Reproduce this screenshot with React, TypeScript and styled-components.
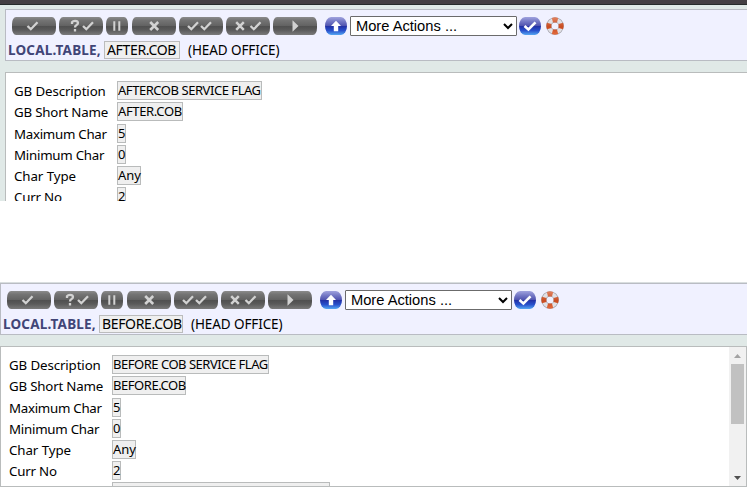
import React, { useId } from "react";
import styled, { createGlobalStyle } from "styled-components";

const GlobalStyle = createGlobalStyle`
  *, *::before, *::after { box-sizing: border-box; }
  html, body { margin: 0; background: #fff; overflow: hidden; }
  body { font-family: "Noto Sans", "Open Sans", sans-serif; font-size: 14px; color: #000; }
`;

const Page = styled.main`
  width: 747px;
  height: 490px;
  overflow: hidden;
  display: flex;
  flex-direction: column;
  gap: 81px;
`;

const Screen = styled.section<{ $first?: boolean }>`
  flex: none;
  height: ${(p) => (p.$first ? 201 : 205)}px;
  overflow: hidden;
  background: #e0e9e7;
  border-top: ${(p) => (p.$first ? "4px solid #443f43" : "1px solid #d9dedf")};
  padding: ${(p) => (p.$first ? "5px 0 0 5px" : "0")};
  box-shadow: ${(p) => (p.$first ? "inset 0 1px 0 #262b2b" : "none")};
`;

const Header = styled.header`
  height: 52px;
  background: #f0f1ff;
  border: 1px solid #b9bcc3;
  border-right: 0;
  padding: 5px 0 0 1px;
`;

const Toolbar = styled.div`
  height: 22px;
  display: flex;
  align-items: center;
  padding-left: 5px;
`;

const Pill = styled.button<{ $w?: number }>`
  flex: none;
  width: ${(p) => p.$w ?? 44}px;
  height: 18px;
  margin: 0 3.2px 0 0;
  padding: 0;
  border: 0;
  border-radius: 4px / 7px;
  background: linear-gradient(#8c8c8c 0, #747474 18%, #636363 48%, #505050 53%, #5a5a5a 72%, #7b7b7b 100%);
  display: flex;
  justify-content: center;
  align-items: center;
  svg { display: block; }
`;

const Round = styled.button`
  flex: none;
  width: 22px;
  height: 18px;
  margin: 0 3px 0 0;
  padding: 0;
  border: 0;
  border-radius: 6px / 9px;
  background: linear-gradient(#a0a3de 0, #7478c5 25%, #5155b0 48%, #2231a5 52%, #2850cb 75%, #55a7f2 100%);
  display: flex;
  justify-content: center;
  align-items: center;
`;

const Actions = styled.select`
  width: 167px;
  height: 20px;
  margin: 0 2px 0 0;
  padding: 0 0 0 1px;
  border: 1px solid #6b6b6b;
  border-radius: 1px;
  background: #fff;
  color: #000;
  font: 14.7px "Liberation Sans", Arial, sans-serif;
`;

const Spacer = styled.span`
  width: 4.6px;
`;

const Help = styled.span`
  display: flex;
  margin-left: 2px;
`;

const TitleLine = styled.div`
  display: flex;
  align-items: center;
  height: 20px;
  line-height: 18px;
  margin-top: 3px;
  white-space: pre;
`;

const AppName = styled.h1`
  width: 97px;
  margin: 0;
  padding-left: 1px;
  font-size: 13.5px;
  font-weight: 700;
  letter-spacing: 0.2px;
  color: #414577;
`;

const RecordId = styled.span<{ $w: number }>`
  width: ${(p) => p.$w}px;
  height: 18px;
  line-height: 16px;
  border: 1px solid #bbbcbd;
  background: #efefef;
  padding-left: 2px;
  font-size: 14px;
  letter-spacing: -0.35px;
`;

const Company = styled.span`
  margin-left: 8px;
  font-size: 13.5px;
  letter-spacing: -0.1px;
`;

const Content = styled.div<{ $open?: boolean }>`
  height: 141px;
  margin-top: 11px;
  border: 1px solid #b9bcbc;
  border-right-width: ${(p) => (p.$open ? 0 : 1)}px;
  background: #fff;
  display: flex;
`;

const Form = styled.dl`
  flex: 1;
  height: 139px;
  margin: 0;
  padding: 8px 0 0 8px;
  overflow: hidden;
`;

const Row = styled.div<{ $extra?: boolean }>`
  height: 21px;
  margin-top: ${(p) => (p.$extra ? 1 : 0)}px;
  display: flex;
  align-items: flex-start;
`;

const Label = styled.dt<{ $s: number }>`
  flex: none;
  width: 103px;
  line-height: 21px;
  font-size: 13.3px;
  letter-spacing: ${(p) => p.$s}px;
  white-space: nowrap;
`;

const Value = styled.dd<{ $w: number; $s?: number }>`
  flex: none;
  width: ${(p) => p.$w}px;
  height: 19px;
  margin: 0;
  border: 1px solid #b9bbbb;
  background: #efefef;
  line-height: 17px;
  font-size: 13px;
  letter-spacing: ${(p) => p.$s ?? 0}px;
  white-space: nowrap;
`;

const ScrollTrack = styled.div`
  width: 17px;
  background: #f1f1f1;
  display: flex;
  flex-direction: column;
  align-items: center;
`;

const ScrollThumb = styled.div`
  width: 13px;
  height: 60px;
  background: #c1c1c1;
  margin-bottom: auto;
`;

const tick = "M1 6L4.3 9.2L11 2.2";

type GlyphKind = "check" | "query" | "pause" | "cross" | "double" | "reject" | "play";

const Glyph = ({ kind }: { kind: GlyphKind }) => (
  <svg width="36" height="12" viewBox="0 0 36 12" fill="none" stroke="#d2d2d2" strokeWidth="2.3" overflow="visible">
    {kind === "check" && <path transform="translate(10.5)" d={tick} />}
    {kind === "query" && (
      <>
        <path transform="translate(19)" d={tick} />
        <path d="M9 4V2.2Q10 .8 12 .8Q15 .8 15 3Q15 4.4 13.3 5.2Q12 5.8 12 7.5M12 9V11.4" />
      </>
    )}
    {kind === "pause" && <path strokeWidth="2" d="M15.3 1.2V10.8M20.3 1.2V10.8" />}
    {kind === "cross" && <path strokeWidth="2.6" d="M14.2 2L22.2 10M22.2 2L14.2 10" />}
    {kind === "double" && (
      <>
        <path transform="translate(4)" d={tick} />
        <path transform="translate(17)" d={tick} />
      </>
    )}
    {kind === "reject" && (
      <>
        <path strokeWidth="2.5" d="M6.2 2.2L13.8 9.8M13.8 2.2L6.2 9.8" />
        <path transform="translate(19.5)" d={tick} />
      </>
    )}
    {kind === "play" && <path d="M15.5 0.2V11.8L21.5 6Z" fill="#d2d2d2" stroke="none" />}
  </svg>
);

const UpArrow = () => (
  <svg width="14" height="14" viewBox="0 0 14 14">
    <path d="M7 1.8L12 7H9.2V12.2H4.8V7H2Z" fill="#fff" />
  </svg>
);

const CommitTick = () => (
  <svg width="14" height="12" viewBox="0 0 14 12">
    <path d="M1.5 6L5.4 9.5L12.5 2.3" fill="none" stroke="#fff" strokeWidth="2.6" />
  </svg>
);

const HelpRing = () => {
  const id = useId();
  return (
    <svg width="18" height="18" viewBox="0 0 18 18">
      <defs>
        <linearGradient id={id} x2="0" y2="1">
          <stop stopColor="#e0815f" />
          <stop offset=".55" stopColor="#c94c21" />
          <stop offset="1" stopColor="#e26a3c" />
        </linearGradient>
      </defs>
      <circle cx="9" cy="9" r="6.2" fill="none" stroke="#9f9ea6" strokeWidth="5.2" />
      <circle cx="9" cy="9" r="6.2" fill="none" stroke="#e2e1e5" strokeWidth="3.8" />
      <path
        fill={`url(#${id})`}
        d="M5.8 1Q9-.3 12.2 1L11 5.4H7ZM5.8 17Q9 18.3 12.2 17L11 12.6H7ZM1 5.8Q-.3 9 1 12.2L5.4 11V7ZM17 5.8Q18.3 9 17 12.2L12.6 11V7Z"
      />
    </svg>
  );
};

const ScrollArrow = ({ down }: { down?: boolean }) => (
  <svg width="17" height="17" viewBox="0 0 17 17">
    <path d={down ? "M5 7H12L8.5 11Z" : "M5 11H12L8.5 7Z"} fill={down ? "#505050" : "#a3a3a3"} />
  </svg>
);

const buttons: { kind: GlyphKind; label: string; w?: number }[] = [
  { kind: "check", label: "Validate" },
  { kind: "query", label: "Check" },
  { kind: "pause", label: "Hold", w: 22 },
  { kind: "cross", label: "Delete" },
  { kind: "double", label: "Authorise" },
  { kind: "reject", label: "Reverse" },
  { kind: "play", label: "Next" },
];

interface Field {
  label: string;
  spacing: number;
  value: string;
  width: number;
  valueSpacing?: number;
}

const fieldsFor = (
  description: Pick<Field, "value" | "width" | "valueSpacing">,
  shortName: Pick<Field, "value" | "width" | "valueSpacing">,
): Field[] => [
  { label: "GB Description", spacing: -0.12, ...description },
  { label: "GB Short Name", spacing: -0.2, ...shortName },
  { label: "Maximum Char", spacing: -0.28, value: "5", width: 9 },
  { label: "Minimum Char", spacing: -0.25, value: "0", width: 9 },
  { label: "Char Type", spacing: -0.08, value: "Any", width: 24, valueSpacing: -0.1 },
  { label: "Curr No", spacing: -0.2, value: "2", width: 9 },
  { label: "", spacing: 0, value: "", width: 218 },
];

interface RecordProps {
  first?: boolean;
  id: string;
  idWidth: number;
  fields: Field[];
}

const RecordScreen = ({ first, id, idWidth, fields }: RecordProps) => (
  <Screen $first={first}>
    <Header>
      <Toolbar>
        {buttons.map((b) => (
          <Pill key={b.kind} $w={b.w} aria-label={b.label}>
            <Glyph kind={b.kind} />
          </Pill>
        ))}
        <Spacer />
        <Round aria-label="Go up">
          <UpArrow />
        </Round>
        <Actions aria-label="Actions">
          <option>More Actions ...</option>
        </Actions>
        <Round aria-label="Commit">
          <CommitTick />
        </Round>
        <Help>
          <HelpRing />
        </Help>
      </Toolbar>
      <TitleLine>
        <AppName>LOCAL.TABLE,</AppName>
        <RecordId $w={idWidth}>{id}</RecordId>
        <Company>(HEAD OFFICE)</Company>
      </TitleLine>
    </Header>
    <Content $open={first}>
      <Form>
        {fields.map((f, i) => (
          <Row key={i} $extra={i === 2}>
            <Label $s={f.spacing}>{f.label}</Label>
            <Value $w={f.width} $s={f.valueSpacing}>
              {f.value}
            </Value>
          </Row>
        ))}
      </Form>
      {!first && (
        <ScrollTrack>
          <ScrollArrow />
          <ScrollThumb />
          <ScrollArrow down />
        </ScrollTrack>
      )}
    </Content>
  </Screen>
);

export default function App() {
  return (
    <>
      <GlobalStyle />
      <Page>
        <RecordScreen
          first
          id="AFTER.COB"
          idWidth={76}
          fields={fieldsFor(
            { value: "AFTERCOB SERVICE FLAG", width: 145, valueSpacing: -0.45 },
            { value: "AFTER.COB", width: 66, valueSpacing: -0.35 },
          )}
        />
        <RecordScreen
          id="BEFORE.COB"
          idWidth={84}
          fields={fieldsFor(
            { value: "BEFORE COB SERVICE FLAG", width: 157, valueSpacing: -0.48 },
            { value: "BEFORE.COB", width: 74, valueSpacing: -0.45 },
          )}
        />
      </Page>
    </>
  );
}
